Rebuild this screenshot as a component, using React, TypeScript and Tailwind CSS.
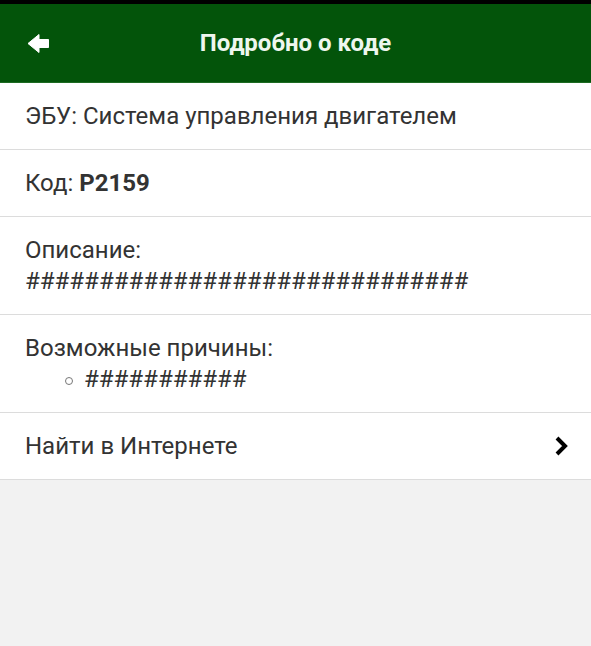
const row = "border-b border-[#dcdcdc] bg-white px-[25px] py-[17.5px] leading-[31px]";

export default function App() {
  return (
    <div className="min-h-[646px] bg-[#f2f2f2] text-[24px] text-[#333]" style={{ fontFamily: "Roboto, 'Liberation Sans', sans-serif" }}>
      <div className="h-[4px] bg-black" />
      <div className="relative flex h-[79px] items-center justify-center border-b border-[#1d6b22] bg-[#03540a]">
        {/* back arrow */}
        <svg width="21" height="19" viewBox="0 0 21 19" className="absolute left-[28px] top-[30px]">
          <polygon points="0,9.5 11,0.5 11,5.5 20.5,5.5 20.5,13.5 11,13.5 11,18.5" fill="#fff" strokeLinejoin="round" stroke="#fff" strokeWidth="1" />
        </svg>
        <span className="text-[24px] font-bold text-[#eef7ee]">Подробно о коде</span>
      </div>

      <div className={row}>ЭБУ: Система управления двигателем</div>
      <div className={row}>
        Код: <b className="font-bold">P2159</b>
      </div>
      <div className={row}>
        <div>Описание:</div>
        <div>##############################</div>
      </div>
      <div className={row}>
        <div>Возможные причины:</div>
        <div className="flex items-center pl-[40px]">
          <span className="mr-[11px] mt-[3px] h-[8px] w-[8px] rounded-full border border-[#777]" />
          <span>###########</span>
        </div>
      </div>
      <div className={`${row} flex items-center justify-between`}>
        <span>Найти в Интернете</span>
        <svg width="15" height="22" viewBox="0 0 15 22" className="mr-[-3px]">
          <polyline points="3,3 11,11 3,19" fill="none" stroke="#000" strokeWidth="4" strokeLinejoin="miter" />
        </svg>
      </div>
    </div>
  );
}
